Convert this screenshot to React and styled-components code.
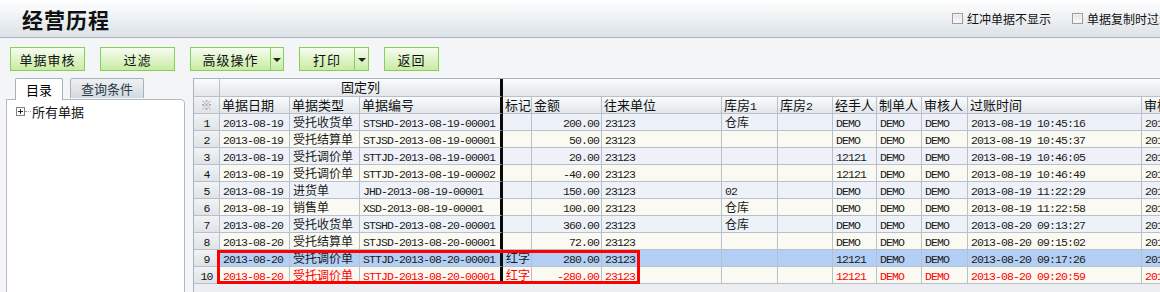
import React from 'react';
import styled, { createGlobalStyle, css } from 'styled-components';

const GlobalStyle = createGlobalStyle`
  html, body {
    margin: 0;
    padding: 0;
    background: #f4f5f7;
    overflow: hidden;
  }
  body {
    font-family: "Noto Sans CJK SC", "Noto Sans", sans-serif;
    color: #111;
  }
`;

const Page = styled.div`
  width: 1160px;
  height: 292px;
  overflow: hidden;
`;

const TitleBar = styled.div`
  height: 37px;
  display: flex;
  align-items: center;
  padding-left: 22px;
  background: linear-gradient(#ffffff, #dce2e7);
  border-bottom: 1px solid #a7b3bd;
  overflow: hidden;
`;

const Title = styled.h1`
  flex: 0 0 930px;
  margin: 0;
  font-size: 21px;
  font-weight: 700;
  letter-spacing: 1px;
  color: #111;
`;

const Checks = styled.div`
  display: flex;
  flex-shrink: 0;
  gap: 21px;
  white-space: nowrap;
  font-size: 12px;
`;

const CheckItem = styled.label`
  display: flex;
  align-items: center;
  gap: 4px;
`;

const Box = styled.span`
  width: 11px;
  height: 11px;
  box-sizing: border-box;
  border: 1px solid #9b9b9b;
  background: linear-gradient(#e2e2e2, #fafafa);
  box-shadow: inset 0 0 0 1px #f4f4f4;
`;

const Toolbar = styled.div`
  display: flex;
  gap: 15px;
  padding: 9px 10px 0;
`;

const greenFace = css`
  height: 24px;
  box-sizing: border-box;
  border: 1px solid #88cf59;
  background: linear-gradient(#f6fcef, #c8eca2);
`;

const Button = styled.div`
  ${greenFace};
  width: ${({ $w }) => $w}px;
  display: flex;
  align-items: center;
  justify-content: center;
  font-size: 13px;
  letter-spacing: 1px;
`;

const Split = styled.div`
  ${greenFace};
  display: flex;
`;

const SplitMain = styled.div`
  width: ${({ $w }) => $w}px;
  border-right: 1px solid #88cf59;
  display: flex;
  align-items: center;
  justify-content: center;
  font-size: 13px;
  letter-spacing: 1px;
`;

const Caret = styled.div`
  width: ${({ $w }) => $w}px;
  display: flex;
  align-items: center;
  justify-content: center;

  &::after {
    content: '';
    border-left: 4px solid transparent;
    border-right: 4px solid transparent;
    border-top: 4px solid #222;
    margin-top: 2px;
  }
`;

const Main = styled.div`
  display: flex;
  align-items: flex-start;
  margin-top: 7px;
`;

const Side = styled.div`
  width: 179px;
  margin: 0 8px 0 6px;
  flex-shrink: 0;
`;

const Tabs = styled.div`
  display: flex;
  align-items: flex-end;
  gap: 7px;
  padding-left: 9px;
  height: 21px;
`;

const Tab = styled.div`
  width: ${({ $w }) => $w}px;
  height: ${({ $active }) => ($active ? 22 : 20)}px;
  align-self: flex-start;
  box-sizing: border-box;
  border: 1px solid #a9b2bb;
  border-bottom: none;
  border-radius: 2px 2px 0 0;
  display: flex;
  align-items: center;
  justify-content: center;
  font-size: 13px;
  position: relative;
  z-index: ${({ $active }) => ($active ? 1 : 0)};
  background: ${({ $active }) => ($active ? '#ffffff' : 'linear-gradient(#eef1f3, #d3d9de)')};
  color: ${({ $active }) => ($active ? '#000' : '#2b3b4b')};
`;

const Panel = styled.div`
  height: 200px;
  background: #fff;
  border: 1px solid #b1bac3;
  border-radius: 0 4px 0 0;
  padding: 3px 9px;
`;

const TreeItem = styled.div`
  display: flex;
  align-items: center;
  height: 16px;
  font-size: 13px;
`;

const Plus = styled.span`
  width: 9px;
  height: 9px;
  box-sizing: border-box;
  border: 1px solid #808080;
  position: relative;

  &::before, &::after {
    content: '';
    position: absolute;
    background: #222;
  }
  &::before { left: 1px; top: 3px; width: 5px; height: 1px; }
  &::after { left: 3px; top: 1px; width: 1px; height: 5px; }
`;

const Dots = styled.span`
  width: 6px;
  border-top: 1px dotted #999;
  margin-right: 1px;
`;

const GridWrap = styled.div`
  flex: 1;
  height: 214px;
  position: relative;
  overflow: hidden;
  background: #eceef1;
  border-left: 1px solid #a9b3bd;
  border-top: 1px solid #a9b3bd;
`;

const Grid = styled.div`
  display: grid;
  width: max-content;
  grid-template-columns: ${({ $cols }) => $cols};
  grid-template-rows: 18px repeat(11, 17px);
`;

const Cell = styled.div`
  box-sizing: border-box;
  border-right: ${({ $edge }) => ($edge ? '3px solid #0a0a0a' : '1px solid #b7c1cc')};
  border-bottom: 1px solid #b7c1cc;
  padding: 0 ${({ $right }) => ($right ? '2px' : '0')} 0 3px;
  line-height: 16px;
  font-size: 12px;
  white-space: nowrap;
  overflow: hidden;
  text-align: ${({ $right }) => ($right ? 'right' : 'left')};
  color: ${({ $red }) => ($red ? '#ff0000' : '#1a1a1a')};
  background: ${({ $bg }) => $bg};
`;

const HeadCell = styled(Cell)`
  font-size: 13px;
  line-height: 16px;
  padding: 0 1px 0 2px;
  color: #111;
  background: linear-gradient(#fafbfc, #e2e6ea);
  grid-column: ${({ $span }) => ($span ? `span ${$span}` : 'auto')};
  text-align: ${({ $center }) => ($center ? 'center' : 'left')};
  overflow: visible;
`;

const NumCell = styled(Cell)`
  padding: 0;
  text-align: center;
  color: ${({ $dim }) => ($dim ? '#9a9a9a' : '#111')};
  background: linear-gradient(#f1f3f5, #dfe3e7);
`;

const Latin = styled.span`
  font-family: "Liberation Mono", "DejaVu Sans Mono", monospace;
  font-size: 11.5px;
  letter-spacing: -0.9px;
  white-space: pre;
`;

const Ring = styled.div`
  position: absolute;
  left: 23px;
  top: 171px;
  width: 423px;
  height: 34px;
  box-sizing: border-box;
  border: 3px solid #ff0000;
  pointer-events: none;
`;

const Txt = ({ children }) => {
  const s = String(children ?? '');
  return s.split(/([\x20-\x7e]+)/).filter(Boolean).map((part, i) =>
    /^[\x20-\x7e]+$/.test(part) ? <Latin key={i}>{part}</Latin> : <span key={i}>{part}</span>
  );
};

const columns = [
  { title: '单据日期', width: 70 },
  { title: '单据类型', width: 70 },
  { title: '单据编号', width: 143, edge: true },
  { title: '标记', width: 29 },
  { title: '金额', width: 70, right: true },
  { title: '往来单位', width: 120 },
  { title: '库房1', width: 56 },
  { title: '库房2', width: 55 },
  { title: '经手人', width: 44 },
  { title: '制单人', width: 45 },
  { title: '审核人', width: 46 },
  { title: '过账时间', width: 174 },
  { title: '审核时间', width: 174 },
];

const rows = [
  ['2013-08-19', '受托收货单', 'STSHD-2013-08-19-00001', '', '200.00', '23123', '仓库', '', 'DEMO', 'DEMO', 'DEMO', '2013-08-19 10:45:16', '2013-08-19 10:45:16'],
  ['2013-08-19', '受托结算单', 'STJSD-2013-08-19-00001', '', '50.00', '23123', '', '', 'DEMO', 'DEMO', 'DEMO', '2013-08-19 10:45:37', '2013-08-19 10:45:37'],
  ['2013-08-19', '受托调价单', 'STTJD-2013-08-19-00001', '', '20.00', '23123', '', '', '12121', 'DEMO', 'DEMO', '2013-08-19 10:46:05', '2013-08-19 10:46:05'],
  ['2013-08-19', '受托调价单', 'STTJD-2013-08-19-00002', '', '-40.00', '23123', '', '', '12121', 'DEMO', 'DEMO', '2013-08-19 10:46:49', '2013-08-19 10:46:49'],
  ['2013-08-19', '进货单', 'JHD-2013-08-19-00001', '', '150.00', '23123', '02', '', 'DEMO', 'DEMO', 'DEMO', '2013-08-19 11:22:29', '2013-08-19 11:22:29'],
  ['2013-08-19', '销售单', 'XSD-2013-08-19-00001', '', '100.00', '23123', '仓库', '', 'DEMO', 'DEMO', 'DEMO', '2013-08-19 11:22:58', '2013-08-19 11:22:58'],
  ['2013-08-20', '受托收货单', 'STSHD-2013-08-20-00001', '', '360.00', '23123', '仓库', '', 'DEMO', 'DEMO', 'DEMO', '2013-08-20 09:13:27', '2013-08-20 09:13:27'],
  ['2013-08-20', '受托结算单', 'STJSD-2013-08-20-00001', '', '72.00', '23123', '', '', 'DEMO', 'DEMO', 'DEMO', '2013-08-20 09:15:02', '2013-08-20 09:15:02'],
  ['2013-08-20', '受托调价单', 'STTJD-2013-08-20-00001', '红字', '280.00', '23123', '', '', '12121', 'DEMO', 'DEMO', '2013-08-20 09:17:26', '2013-08-20 09:17:26'],
  ['2013-08-20', '受托调价单', 'STTJD-2013-08-20-00001', '红字', '-280.00', '23123', '', '', '12121', 'DEMO', 'DEMO', '2013-08-20 09:20:59', '2013-08-20 09:20:59'],
];

const rowBg = (i) => {
  if (i === 8) return '#b4cff5';
  return i % 2 === 0 ? '#eef2f8' : '#fbfaf2';
};

export default function App() {
  const template = `26px ${columns.map((c) => `${c.width}px`).join(' ')}`;

  return (
    <Page>
      <GlobalStyle />
      <TitleBar>
        <Title>经营历程</Title>
        <Checks>
          <CheckItem><Box />红冲单据不显示</CheckItem>
          <CheckItem><Box />单据复制时过滤已审核单据</CheckItem>
        </Checks>
      </TitleBar>

      <Toolbar>
        <Button $w={75}>单据审核</Button>
        <Button $w={75}>过滤</Button>
        <Split>
          <SplitMain $w={79}>高级操作</SplitMain>
          <Caret $w={12} />
        </Split>
        <Split>
          <SplitMain $w={54}>打印</SplitMain>
          <Caret $w={13} />
        </Split>
        <Button $w={55}>返回</Button>
      </Toolbar>

      <Main>
        <Side>
          <Tabs>
            <Tab $active $w={48}>目录</Tab>
            <Tab $w={74}>查询条件</Tab>
          </Tabs>
          <Panel>
            <TreeItem>
              <Plus />
              <Dots />
              所有单据
            </TreeItem>
          </Panel>
        </Side>

        <GridWrap>
          <Grid $cols={template}>
            <HeadCell />
            <HeadCell $span={3} $center $edge>固定列</HeadCell>
            <HeadCell $span={columns.length - 3} />

            <NumCell $dim>※</NumCell>
            {columns.map((c) => (
              <HeadCell key={c.title} $edge={c.edge}><Txt>{c.title}</Txt></HeadCell>
            ))}

            {rows.map((r, i) => (
              <React.Fragment key={i}>
                <NumCell><Txt>{i + 1}</Txt></NumCell>
                {r.map((v, j) => (
                  <Cell
                    key={j}
                    $bg={rowBg(i)}
                    $edge={columns[j].edge}
                    $right={columns[j].right}
                    $red={i === 9}
                  >
                    <Txt>{v}</Txt>
                  </Cell>
                ))}
              </React.Fragment>
            ))}
          </Grid>
          <Ring />
        </GridWrap>
      </Main>
    </Page>
  );
}
